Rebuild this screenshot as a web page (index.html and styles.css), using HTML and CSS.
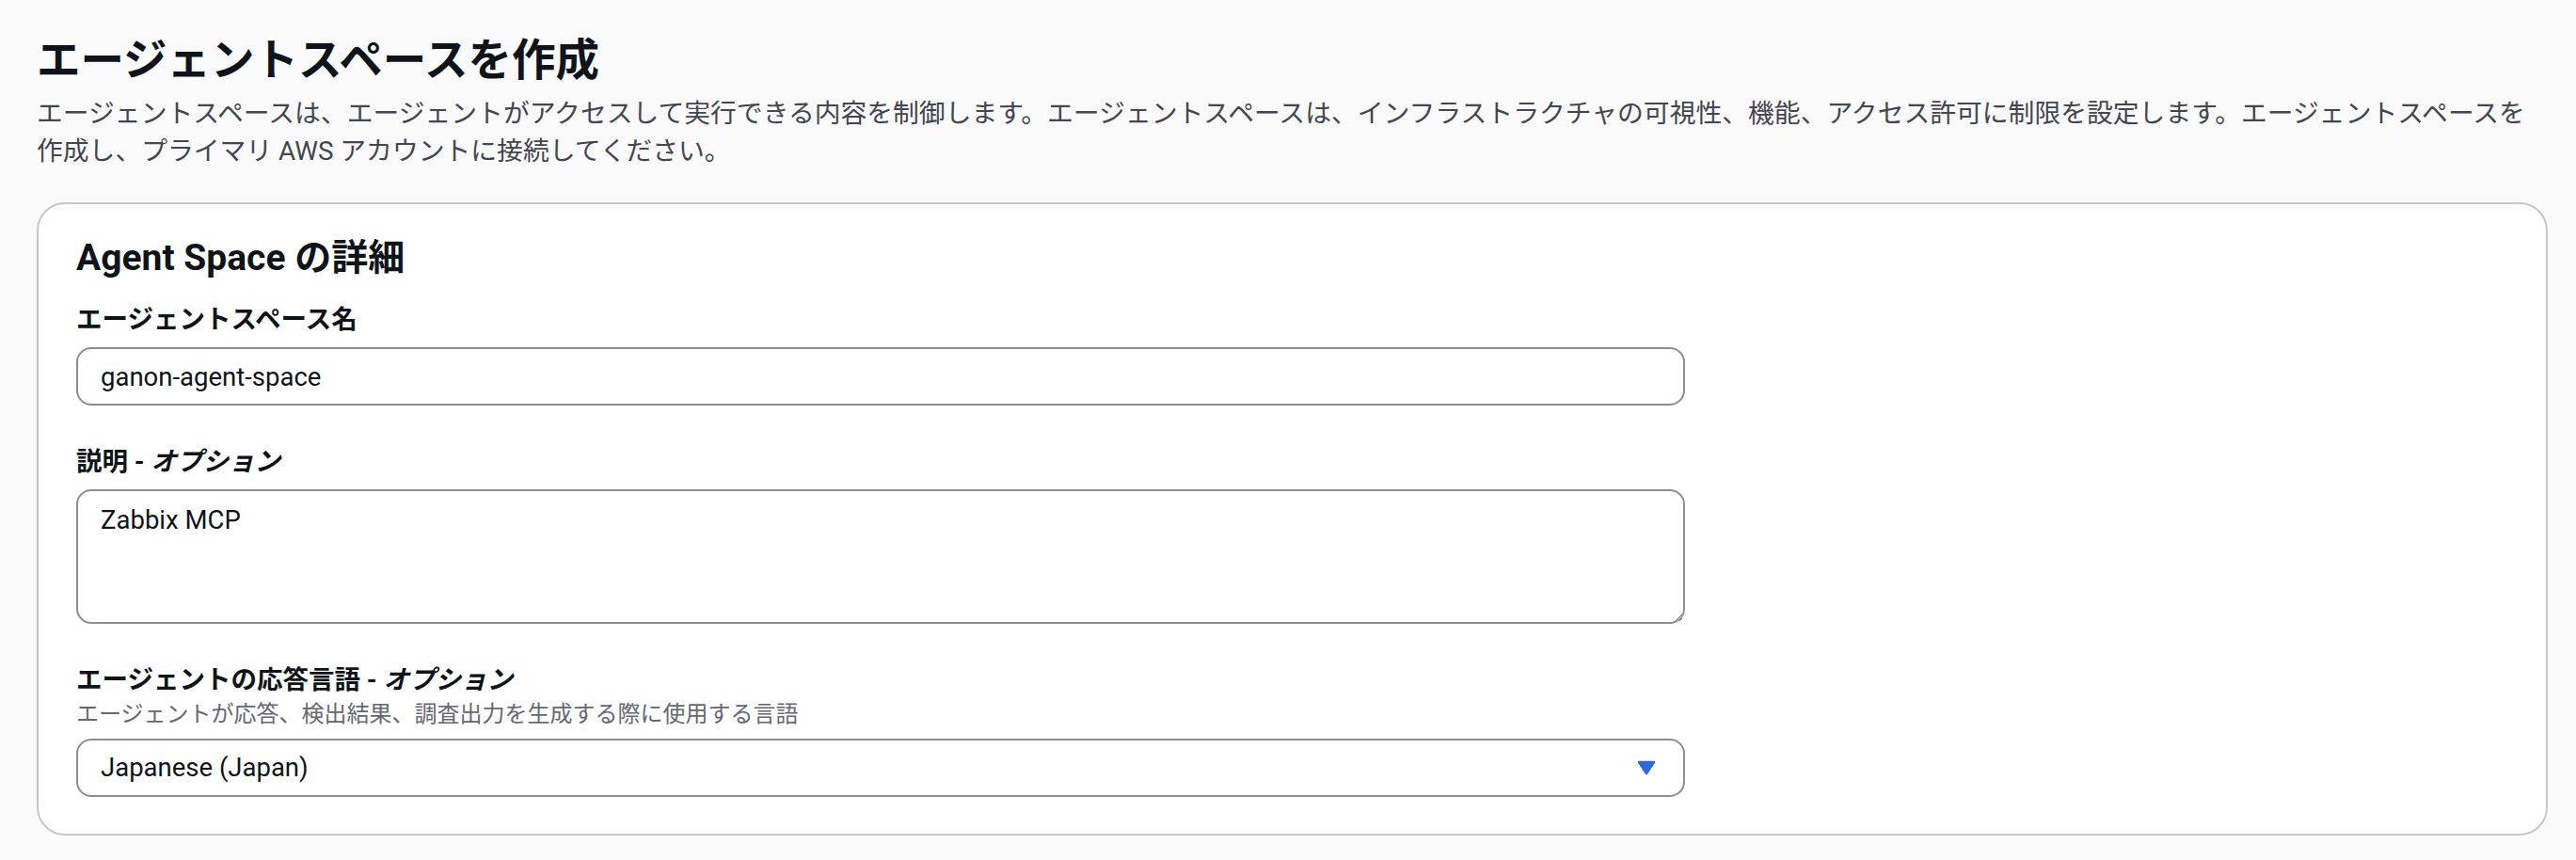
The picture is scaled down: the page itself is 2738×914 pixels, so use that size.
FILE: index.html
```html
<!DOCTYPE html>
<html lang="ja">
<head>
<meta charset="utf-8">
<title>エージェントスペースを作成</title>
<link rel="stylesheet" href="styles.css">
</head>
<body>
<main class="page">
  <header class="page-header">
    <h1 class="page-title">エージェントスペースを作成</h1>
    <p class="page-desc">エージェントスペースは、エージェントがアクセスして実行できる内容を制御します。エージェントスペースは、インフラストラクチャの可視性、機能、アクセス許可に制限を設定します。エージェントスペースを作成し、プライマリ AWS アカウントに接続してください。</p>
  </header>
  <section class="card">
    <h2 class="card-title">Agent Space の詳細</h2>
    <div class="fields">
      <div class="field">
        <label class="field-label" for="name">エージェントスペース名</label>
        <input class="control input" id="name" type="text" value="ganon-agent-space">
      </div>
      <div class="field">
        <label class="field-label" for="desc">説明 - <i>オプション</i></label>
        <textarea class="control textarea" id="desc">Zabbix MCP</textarea>
      </div>
      <div class="field">
        <div class="field-label">エージェントの応答言語 - <i>オプション</i></div>
        <div class="field-hint">エージェントが応答、検出結果、調査出力を生成する際に使用する言語</div>
        <div class="control select" role="button">
          <span class="select-value">Japanese (Japan)</span>
          <svg class="caret" width="20" height="16" viewBox="0 0 20 16" aria-hidden="true">
            <polygon points="2,2 18,2 10,14" fill="#2b6adb" stroke="#2b6adb" stroke-width="2.5" stroke-linejoin="round"/>
          </svg>
        </div>
      </div>
    </div>
  </section>
</main>
</body>
</html>
```
FILE: styles.css
```css
html, body {
  margin: 0;
  padding: 0;
  background: #fafafa;
}
body {
  font-family: Roboto, "Noto Sans CJK JP", sans-serif;
  color: #0f141a;
}
.page {
  padding: 34px 30px 26px 39px;
}
.page-title {
  margin: 0;
  font-size: 46.5px;
  line-height: 60px;
  font-weight: 700;
  color: #0f141a;
}
.page-desc {
  margin: 7px 0 0;
  padding-right: 22px;
  font-size: 27.8px;
  line-height: 40px;
  color: #424650;
}
.card {
  margin-top: 34px;
  background: #ffffff;
  border: 2px solid #c6c6cd;
  border-radius: 30px;
  padding: 33px 40px 39px;
}
.card-title {
  margin: 0;
  font-size: 39px;
  line-height: 48px;
  font-weight: 700;
  color: #0f141a;
}
.fields {
  margin-top: 22px;
  display: flex;
  flex-direction: column;
  gap: 40px;
}
.field {
  display: flex;
  flex-direction: column;
  width: 1710px;
}
.field-label {
  font-size: 27.5px;
  line-height: 40px;
  font-weight: 700;
  color: #0f141a;
}
.field-label i {
  font-style: italic;
}
.field-hint {
  font-size: 24px;
  line-height: 32px;
  color: #656871;
}
.control {
  box-sizing: border-box;
  width: 1710px;
  margin-top: 9px;
  border: 2px solid #8c8c94;
  border-radius: 16px;
  background: #ffffff;
  font-family: Roboto, "Noto Sans CJK JP", sans-serif;
  font-size: 27.5px;
  color: #0f141a;
  outline: none;
}
.input {
  height: 62px;
  padding: 0 24px;
  line-height: 40px;
}
.textarea {
  display: block;
  height: 143px;
  padding: 11px 24px;
  line-height: 40px;
  resize: vertical;
}
.select {
  height: 62px;
  margin-top: 10px;
  padding: 0 29px 0 24px;
  display: flex;
  align-items: center;
  justify-content: space-between;
  line-height: 40px;
}
.caret {
  display: block;
  flex: none;
}
```
